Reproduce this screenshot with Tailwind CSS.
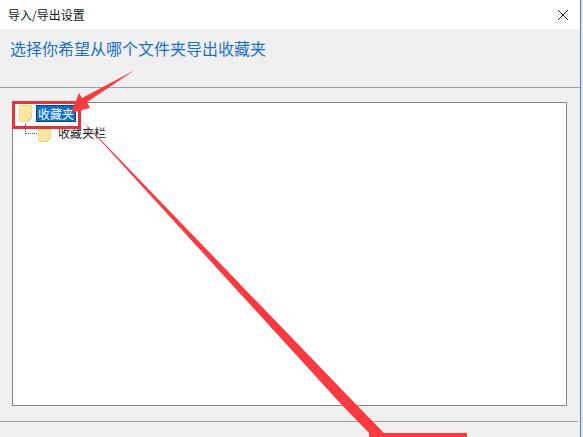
<!DOCTYPE html>
<html lang="zh-CN">
<head>
  <meta charset="UTF-8">
  <title>导入/导出设置</title>
  <script src="https://cdn.jsdelivr.net/npm/@tailwindcss/browser@4"></script>
</head>
<body class="relative w-[583px] h-[437px] overflow-hidden bg-white font-['Noto_Sans_CJK_SC','Liberation_Sans',sans-serif]">
  <div class="flex h-[437px]">
    <!-- Dialog -->
    <div class="w-[580px] flex flex-col">
      <div class="h-[29px] bg-white flex items-center justify-between pl-2 pr-[11px]">
        <span class="text-[12px] leading-none text-[#1a1a1a]">导入/导出设置</span>
        <svg width="12" height="12" viewBox="0 0 12 12"><path d="M1 1L11 11M11 1L1 11" stroke="#222" stroke-width="1" fill="none"/></svg>
      </div>
      <div class="h-[58px] bg-[#f0f0f0] pl-[10px] pt-[8px]">
        <h1 class="text-[16px] leading-[22px] font-normal text-[#1a70c4]">选择你希望从哪个文件夹导出收藏夹</h1>
      </div>
      <div class="h-px bg-[#a0a0a0]"></div>
      <div class="flex-1 bg-[#f0f0f0] flex flex-col">
        <div class="px-3 pt-[14px]">
          <div class="w-[555px] h-[304px] bg-white border border-[#858585] pt-[2px] pl-[6px]">
            <div class="flex items-center h-[17px]">
              <svg width="13" height="17" viewBox="0 0 13 17"><path d="M0.5 0.5H12.5V13L9.5 16.5H0.5Z" fill="#fbe6a2" stroke="#ecd98f"/><path d="M12.5 13H9.5V16.5Z" fill="#e8cd78"/></svg>
              <span class="ml-[4px] w-[40px] h-[17px] bg-[#0a6fc9] text-white text-[12px] leading-[17px] text-center outline-1 outline-dotted outline-[#111] -outline-offset-1">收藏夹</span>
            </div>
            <div class="flex items-center h-[17px] mt-[2px]">
              <div class="w-[12px] h-[10px] ml-[6px] -mt-[7px] border-l border-b border-dotted border-[#555]"></div>
              <svg class="ml-[1px] mt-[4px]" width="13" height="15" viewBox="0 0 13 15"><path d="M0.5 0.5H12.5V11.5L9.5 14.5H0.5Z" fill="#fbe6a2" stroke="#ecd98f"/><path d="M12.5 11.5H9.5V14.5Z" fill="#e8cd78"/></svg>
              <span class="ml-[7px] text-[12px] leading-[17px] text-[#222]">收藏夹栏</span>
            </div>
          </div>
        </div>
        <div class="mt-[15px] mr-[2px] h-px bg-[#a0a0a0]"></div>
      </div>
    </div>
    <!-- Window edge -->
    <div class="w-px bg-[#3c86c4]"></div>
    <div class="w-[2px] bg-[#dcebf7]"></div>
  </div>

  <!-- Annotations drawn on top of the screenshot -->
  <svg class="absolute inset-0" width="583" height="437" viewBox="0 0 583 437">
    <rect x="13.5" y="102.5" width="66" height="25" fill="none" stroke="#ea3038" stroke-width="3"/>
    <path d="M135 70L87 102L90 108L71 113L79 93L82 98Z" fill="#f93a3e"/>
    <path d="M77 115L347 395L381 430L384 433H467V437H369V433L340 403Z" fill="#f93a3e"/>
  </svg>
</body>
</html>
